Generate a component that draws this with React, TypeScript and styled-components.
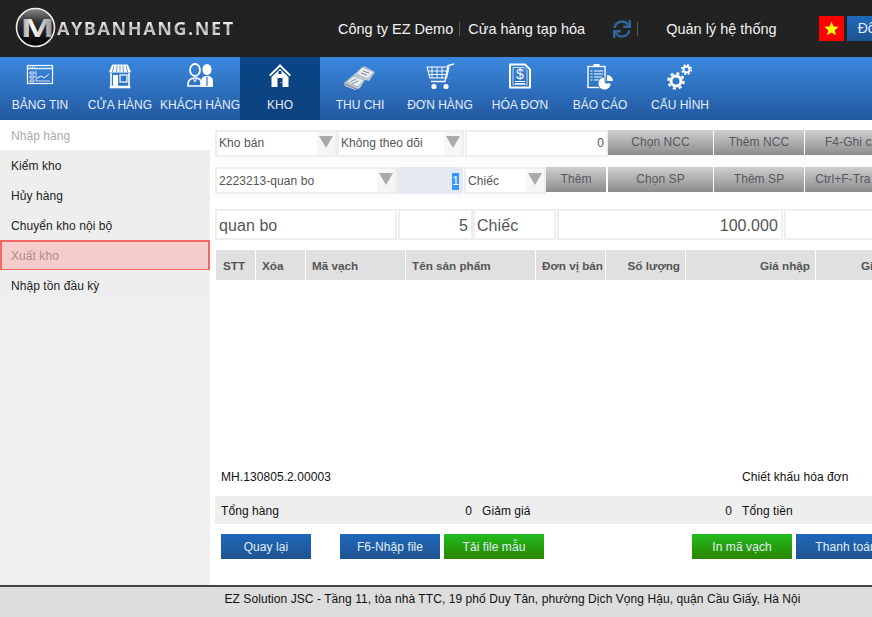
import React from "react";
import styled, { createGlobalStyle } from "styled-components";
import { FaSync } from "react-icons/fa";

const Global = createGlobalStyle`
  html, body { margin: 0; padding: 0; background: #fff; overflow: hidden; }
  body { font-family: "Liberation Sans", Arial, sans-serif; font-size: 12px; color: #111; letter-spacing: .07px; }
`;

const Viewport = styled.div`
  width: 872px;
  height: 617px;
  overflow: hidden;
`;
const Page = styled.div`
  width: 1025px;
  height: 617px;
  display: flex;
  flex-direction: column;
`;

const TopBar = styled.header`
  height: 57px;
  background: #222;
  display: flex;
  align-items: center;
  color: #f2f2f2;
  font-size: 14.5px;
  letter-spacing: 0;
  flex: none;
`;
const Logo = styled.div`
  display: flex;
  align-items: center;
  width: 338px;
  padding-left: 15px;
  box-sizing: border-box;
  flex: none;
  svg { margin-top: -3px; }
`;
const LogoText = styled.span`
  font-family: "Open Sans", sans-serif;
  font-weight: 700;
  font-size: 18px;
  letter-spacing: 1.6px;
  margin-left: 1px;
  margin-top: -1px;
  background: linear-gradient(#ffffff 20%, #b0b0b0 55%, #e8e8e8 85%);
  -webkit-background-clip: text;
  background-clip: text;
  color: transparent;
`;
const Sep = styled.i<{ $m: string }>`
  width: 1px;
  height: 14px;
  background: #56604c;
  margin: ${(p) => p.$m};
  flex: none;
`;
const TopText = styled.span<{ $ml?: number }>`
  white-space: nowrap;
  flex: none;
  margin-left: ${(p) => p.$ml ?? 0}px;
`;
const SyncWrap = styled.span`
  display: flex;
  color: #2f6496;
  margin-left: 28px;
  flex: none;
`;
const Flag = styled.div`
  width: 25px;
  height: 25px;
  background: #f00;
  display: flex;
  align-items: center;
  justify-content: center;
  margin-left: 42px;
  flex: none;
`;
const LangBtn = styled.div`
  width: 120px;
  height: 25px;
  margin-left: 3px;
  padding-left: 11px;
  box-sizing: border-box;
  background: linear-gradient(#1f68bb, #1f5390);
  color: #e6eefa;
  line-height: 25px;
  font-size: 14px;
  white-space: nowrap;
  flex: none;
`;

const Nav = styled.nav`
  height: 63px;
  background: linear-gradient(#3b88de, #22599f);
  display: flex;
  flex: none;
`;
const NavItem = styled.div<{ $active?: boolean }>`
  width: 80px;
  height: 63px;
  display: flex;
  flex-direction: column;
  align-items: center;
  background: ${(p) => (p.$active ? "linear-gradient(#0a4585, #0d4280)" : "transparent")};
  color: #e4eefb;
  font-size: 12px;
  letter-spacing: 0;
  white-space: nowrap;
  svg { display: block; margin-top: 6px; height: 28px; width: 36px; flex: none; }
`;
const NavLabel = styled.span`
  margin-top: 7px;
  line-height: 14px;
`;

const Body = styled.div`
  flex: 1;
  display: flex;
  min-height: 0;
`;
const Side = styled.aside`
  width: 210px;
  background: #f0f0f0;
  flex: none;
`;
const SideItem = styled.div<{ $tone?: "plain" | "current" | "alert" }>`
  height: ${(p) => (p.$tone === "alert" ? "31px" : "30px")};
  line-height: ${(p) => (p.$tone === "alert" ? "28px" : "32px")};
  padding-left: ${(p) => (p.$tone === "alert" ? "9px" : "11px")};
  box-sizing: border-box;
  color: ${(p) => (p.$tone === "current" ? "#aaa" : p.$tone === "alert" ? "#b08a8a" : "#222")};
  background: ${(p) => (p.$tone === "current" ? "#fff" : p.$tone === "alert" ? "#f5cccc" : "#eee")};
  border: ${(p) => (p.$tone === "alert" ? "2px solid #f66868" : "none")};
  margin-bottom: ${(p) => (p.$tone === "alert" ? "-1px" : "0")};
`;

const Main = styled.main`
  flex: 1;
  padding: 9px 0 0 5px;
  display: flex;
  flex-direction: column;
  min-width: 0;
`;
const Tools = styled.div`
  background: #fcfcfc;
  padding-top: 1px;
  height: 69px;
`;
const ToolRow = styled.div`
  display: flex;
  height: 27px;
  margin-bottom: 10px;
`;
const Field = styled.div<{ $w: number; $big?: boolean; $right?: boolean; $bg?: string; $ml?: number; $tall?: boolean }>`
  position: relative;
  width: ${(p) => p.$w}px;
  height: ${(p) => (p.$big ? 31 : 27)}px;
  line-height: ${(p) => (p.$big ? 29 : p.$tall ? 25 : 23)}px;
  box-sizing: border-box;
  border: 2px solid ${(p) => p.$bg ?? "#eee"};
  background: ${(p) => p.$bg ?? "#fff"};
  color: #555;
  padding: ${(p) => (p.$big ? "0 3px 0 2px" : "0 2px")};
  margin-left: ${(p) => p.$ml ?? 0}px;
  font-size: ${(p) => (p.$big ? 16 : 12)}px;
  text-align: ${(p) => (p.$right ? "right" : "left")};
  flex: none;
  white-space: nowrap;
  overflow: hidden;
`;
const Arrow = styled.span`
  position: absolute;
  right: 0;
  top: 0;
  width: 18px;
  height: 23px;
  background: #f6f6f6;
  &::after {
    content: "";
    position: absolute;
    left: 2px;
    top: 4px;
    border-left: 7.5px solid transparent;
    border-right: 7.5px solid transparent;
    border-top: 12px solid #aaa;
  }
`;
const Selected = styled.span`
  background: #3399ff;
  color: #fff;
  padding: 1px 0;
  display: inline-block;
  line-height: 15px;
  width: 7px;
  text-align: center;
`;
const GrayBtn = styled.div<{ $w: number; $gap?: number }>`
  width: ${(p) => p.$w}px;
  margin-right: ${(p) => p.$gap ?? 1}px;
  height: 25px;
  line-height: 24px;
  background: linear-gradient(#cfcfcf, #8c8c8c);
  color: #5b5560;
  text-align: center;
  white-space: nowrap;
  overflow: hidden;
  flex: none;
`;
const InfoRow = styled.div`
  display: flex;
  margin-top: 10px;
  margin-bottom: 10px;
`;
const Thead = styled.div`
  display: flex;
  height: 30px;
  margin-left: 1px;
  background: #e0e0e0;
`;
const Th = styled.div<{ $w: number; $right?: boolean; $pl?: number }>`
  width: ${(p) => p.$w}px;
  box-sizing: border-box;
  border-right: 1px solid #fff;
  line-height: 32px;
  padding: 0 5px 0 ${(p) => p.$pl ?? 6}px;
  font-weight: 700;
  font-size: 11.7px;
  letter-spacing: 0;
  color: #555;
  text-align: ${(p) => (p.$right ? "right" : "left")};
  white-space: nowrap;
  flex: none;
`;
const Meta = styled.div`
  margin-top: auto;
  display: flex;
  padding-left: 6px;
  line-height: 14px;
  color: #111;
`;
const MetaCell = styled.div<{ $w: number }>`
  width: ${(p) => p.$w}px;
  flex: none;
`;
const Totals = styled.div`
  margin-top: 12px;
  height: 28px;
  line-height: 30px;
  background: #eee;
  display: flex;
  padding-left: 6px;
  gap: 10px;
`;
const TotalCell = styled.div<{ $w: number }>`
  width: ${(p) => p.$w}px;
  display: flex;
  justify-content: space-between;
  flex: none;
`;
const Actions = styled.div`
  display: flex;
  padding: 10px 0 26px 6px;
`;
const ActionBtn = styled.div<{ $w: number; $tone: "blue" | "green"; $ml?: number }>`
  width: ${(p) => p.$w}px;
  height: 25px;
  line-height: 26px;
  margin-left: ${(p) => p.$ml ?? 0}px;
  text-align: center;
  color: #e2eef8;
  background: ${(p) =>
    p.$tone === "blue"
      ? "linear-gradient(#1f68bb, #1f5390)"
      : "linear-gradient(#22bb1f, #2a8500)"};
  flex: none;
`;
const Footer = styled.footer`
  height: 32px;
  box-sizing: border-box;
  border-top: 2px solid #444;
  background: #ddd;
  text-align: center;
  line-height: 24px;
  color: #111;
  flex: none;
`;

const W = "#fff";
const Ic = ({ children }: { children: React.ReactNode }) => (
  <svg viewBox="0 0 36 28" fill="none" stroke={W} strokeWidth="1">
    {children}
  </svg>
);

const IconBoard = () => (
  <Ic>
    <rect x="5.5" y="2.5" width="25" height="18" strokeWidth="1.2" />
    <path d="M6 5.5h24" strokeWidth="1.6" strokeOpacity=".8" />
    <path d="M8 4.200h1M10 4.200h1M12 4.200h1" />
    <path d="M8 9h4v2H8zM8 13h4v2H8zM8 17h4v2H8z" strokeWidth=".8" />
    <path d="M14 8v10h14" strokeOpacity=".8" />
    <path d="M15 15l4-2 3 2 5-4" />
  </Ic>
);
const IconStore = () => (
  <Ic>
    <path d="M10.500 2h15l3 7h-21z" fill={W} />
    <path d="M12 2.500L10.500 9M15 2.500L14.500 9M18 2.500V9M21 2.500L21.500 9M24 2.500L25.500 9" stroke="#3a7fc9" strokeWidth=".8" />
    <path d="M9 10v13.500h18V10" strokeWidth="1.6" />
    <rect x="11" y="12" width="5" height="11" fill={W} stroke="none" />
    <rect x="18" y="12" width="7" height="7" strokeWidth="1.2" />
    <path d="M7.500 24.500h21" strokeWidth="1.6" />
  </Ic>
);
const IconCustomers = () => (
  <Ic>
    <ellipse cx="13" cy="7" rx="5" ry="6" strokeWidth="1.800" />
    <path d="M6 22c0-5 3-7 7-7s6 2 6 5v3H6z" strokeWidth="1.6" />
    <path d="M11 15l2 4 2-4" />
    <ellipse cx="25" cy="6.500" rx="4.500" ry="5.500" fill={W} stroke="none" />
    <path d="M19 24v-6c0-3 2-5 6-5s6 2 6 5v6z" fill={W} stroke="none" />
    <path d="M25 14v9" stroke="#2f70b8" strokeWidth="1.200" />
  </Ic>
);
const IconHouse = () => (
  <Ic>
    <path d="M18 1L7 12l1.400 1.300L18 4l9.600 9.300L29 12z" fill={W} stroke="none" />
    <path d="M9.500 14L18 6l8.500 8v10h-17z" fill={W} stroke="none" />
    <rect x="15.500" y="15" width="5" height="9" fill="#0d4280" stroke="none" />
    <rect x="16.500" y="8" width="3" height="3" fill="#0d4280" stroke="none" />
    <circle cx="19" cy="19.500" r=".6" fill={W} stroke="none" />
  </Ic>
);
const IconMoney = () => (
  <svg viewBox="0 0 36 28" fill="none">
    <path d="M2 20L22 3l11 6-6 9-4-1-5 8-5 2-10-4z" fill="#c4ccd4" />
    <path d="M20 4l12 5-6 7-12-5z" fill="#e6ebef" stroke="#8a98a8" strokeWidth=".6" />
    <path d="M4 19l8-6 10 4-6 7z" fill="#e6ebef" stroke="#8a98a8" strokeWidth=".6" />
    <path d="M8 19l6-3M10 21l6-3M21 8l6 2M19 10l6 2" stroke="#7f8c9a" strokeWidth="1" />
    <path d="M3 21l9 4 3 1" stroke="#7a8794" strokeWidth="1.200" />
  </svg>
);
const IconCart = () => (
  <Ic>
    <path d="M32 1l-6 1.500-3 16H9" strokeWidth="1.300" />
    <path d="M5 4h22l-2.500 11H8z" strokeWidth="1.100" />
    <path d="M10 4v11M15 4v11M20 4v11M6 8h20M7 11.500h18" strokeWidth=".9" />
    <circle cx="12" cy="23.500" r="2.600" fill={W} stroke="none" />
    <circle cx="24" cy="23.500" r="2.600" fill={W} stroke="none" />
  </Ic>
);
const IconInvoice = () => (
  <Ic>
    <path d="M8 1.500h15l5 5v18H8z" strokeWidth="2" />
    <path d="M11 4.500h11l3 3v14H11z" strokeWidth=".7" />
    <text x="18" y="16" fontFamily="Liberation Sans, sans-serif" fontSize="14" fontWeight="400" fill={W} stroke="none" textAnchor="middle">$</text>
    <path d="M13 18.500h10M13 20.500h10" strokeWidth=".9" />
  </Ic>
);
const IconReport = () => (
  <Ic>
    <rect x="6" y="3.500" width="17" height="21" strokeWidth="1.400" />
    <rect x="11.500" y="1" width="6" height="3" fill={W} stroke="none" />
    <path d="M12 8h9M12 11h9M12 14h8M12 17h5M8.500 8h2M8.500 11h2M8.500 14h2M8.500 17h2" strokeWidth="1" />
    <path d="M23 14v6h6a6.500 6.500 0 1 1-6-6z" fill={W} stroke="#3478c4" strokeWidth=".8" />
    <path d="M25 12a6 6 0 0 1 6 6h-6z" fill={W} stroke="none" />
  </Ic>
);
const IconGears = () => (
  <Ic>
    <circle cx="14" cy="18" r="5" strokeWidth="3" />
    <circle cx="14" cy="18" r="7.600" strokeWidth="2.400" strokeDasharray="3 3" />
    <circle cx="24.500" cy="6.500" r="3" strokeWidth="2" />
    <circle cx="24.500" cy="6.500" r="4.700" strokeWidth="1.600" strokeDasharray="2 1.700" />
  </Ic>
);

const navItems: [string, React.ReactNode, boolean?][] = [
  ["BẢNG TIN", <IconBoard />],
  ["CỬA HÀNG", <IconStore />],
  ["KHÁCH HÀNG", <IconCustomers />],
  ["KHO", <IconHouse />, true],
  ["THU CHI", <IconMoney />],
  ["ĐƠN HÀNG", <IconCart />],
  ["HÓA ĐƠN", <IconInvoice />],
  ["BÁO CÁO", <IconReport />],
  ["CẤU HÌNH", <IconGears />],
];

const LogoMark = () => (
  <svg width="41" height="41" viewBox="0 0 41 41">
    <defs>
      <linearGradient id="disc" x1="0" y1="0" x2="0" y2="1">
        <stop offset="0" stopColor="#888" />
        <stop offset=".35" stopColor="#333" />
        <stop offset="1" stopColor="#000" />
      </linearGradient>
      <linearGradient id="em" x1="0" y1="0" x2="1" y2="0">
        <stop offset="0" stopColor="#8e8e8e" />
        <stop offset=".35" stopColor="#fff" />
        <stop offset="1" stopColor="#8a8a8a" />
      </linearGradient>
    </defs>
    <circle cx="20.500" cy="20.500" r="19" fill="url(#disc)" stroke="#eee" strokeWidth="1.600" />
    <text x="6" y="30" textLength="33" lengthAdjust="spacingAndGlyphs" fontFamily="Liberation Sans, sans-serif" fontWeight="700" fontSize="26" fill="url(#em)">M</text>
  </svg>
);

export default function App() {
  return (
    <Viewport>
      <Global />
      <Page>
        <TopBar>
          <Logo>
            <LogoMark />
            <LogoText>AYBANHANG.NET</LogoText>
          </Logo>
          <TopText>Công ty EZ Demo</TopText>
          <Sep $m="0 8px 0 6px" />
          <TopText>Cửa hàng tạp hóa</TopText>
          <SyncWrap>
            <FaSync size={18} />
          </SyncWrap>
          <Sep $m="0 0 0 6px" />
          <TopText $ml={28}>Quản lý hệ thống</TopText>
          <Flag>
            <svg width="15" height="15" viewBox="0 0 24 24">
              <path d="M12 1l3.200 7.600 8.300.7-6.300 5.400 1.900 8.100L12 18.500 4.900 22.800l1.900-8.100L.5 9.300l8.300-.7z" fill="#ff0" />
            </svg>
          </Flag>
          <LangBtn>Đổi mật khẩu</LangBtn>
        </TopBar>
        <Nav>
          {navItems.map(([label, icon, active]) => (
            <NavItem key={label} $active={active}>
              {icon}
              <NavLabel>{label}</NavLabel>
            </NavItem>
          ))}
        </Nav>
        <Body>
          <Side>
            <SideItem $tone="current">Nhập hàng</SideItem>
            <SideItem>Kiểm kho</SideItem>
            <SideItem>Hủy hàng</SideItem>
            <SideItem>Chuyển kho nội bộ</SideItem>
            <SideItem $tone="alert">Xuất kho</SideItem>
            <SideItem>Nhập tồn đầu kỳ</SideItem>
          </Side>
          <Main>
            <Tools>
              <ToolRow>
                <Field $w={122}>Kho bán<Arrow /></Field>
                <Field $w={127}>Không theo dõi<Arrow /></Field>
                <Field $w={143} $right $ml={1}>0</Field>
                <GrayBtn $w={105}>Chọn NCC</GrayBtn>
                <GrayBtn $w={90}>Thêm NCC</GrayBtn>
                <GrayBtn $w={100}>F4-Ghi chú</GrayBtn>
              </ToolRow>
              <ToolRow>
                <Field $w={182} $tall>2223213-quan bo<Arrow /></Field>
                <Field $w={66} $right $bg="#e4e9f2" $tall><Selected>1</Selected></Field>
                <Field $w={82} $ml={1} $tall>Chiếc<Arrow /></Field>
                <GrayBtn $w={60} $gap={2}>Thêm</GrayBtn>
                <GrayBtn $w={105}>Chọn SP</GrayBtn>
                <GrayBtn $w={90}>Thêm SP</GrayBtn>
                <GrayBtn $w={100}>Ctrl+F-Tra cứu</GrayBtn>
              </ToolRow>
            </Tools>
            <InfoRow>
              <Field $w={182} $big>quan bo</Field>
              <Field $w={75} $big $right $ml={1}>5</Field>
              <Field $w={83} $big>Chiếc</Field>
              <Field $w={226} $big $right $ml={1}>100.000</Field>
              <Field $w={220} $big $right $ml={1} />
            </InfoRow>
            <Thead>
              <Th $w={40} $pl={7}>STT</Th>
              <Th $w={50}>Xóa</Th>
              <Th $w={100}>Mã vạch</Th>
              <Th $w={130}>Tên sản phẩm</Th>
              <Th $w={70}>Đơn vị bán</Th>
              <Th $w={80} $right>Số lượng</Th>
              <Th $w={130} $right>Giá nhập</Th>
              <Th $w={130} $pl={45}>Giá bán</Th>
            </Thead>
            <Meta>
              <MetaCell $w={521}>MH.130805.2.00003</MetaCell>
              <MetaCell $w={200}>Chiết khấu hóa đơn</MetaCell>
            </Meta>
            <Totals>
              <TotalCell $w={251}><span>Tổng hàng</span><span>0</span></TotalCell>
              <TotalCell $w={250}><span>Giảm giá</span><span>0</span></TotalCell>
              <TotalCell $w={200}><span>Tổng tiền</span></TotalCell>
            </Totals>
            <Actions>
              <ActionBtn $w={90} $tone="blue">Quay lại</ActionBtn>
              <ActionBtn $w={100} $tone="blue" $ml={29}>F6-Nhập file</ActionBtn>
              <ActionBtn $w={100} $tone="green" $ml={4}>Tải file mẫu</ActionBtn>
              <ActionBtn $w={100} $tone="green" $ml={148}>In mã vạch</ActionBtn>
              <ActionBtn $w={100} $tone="blue" $ml={4}>Thanh toán</ActionBtn>
            </Actions>
          </Main>
        </Body>
        <Footer>EZ Solution JSC - Tầng 11, tòa nhà TTC, 19 phố Duy Tân, phường Dịch Vọng Hậu, quận Cầu Giấy, Hà Nội</Footer>
      </Page>
    </Viewport>
  );
}
